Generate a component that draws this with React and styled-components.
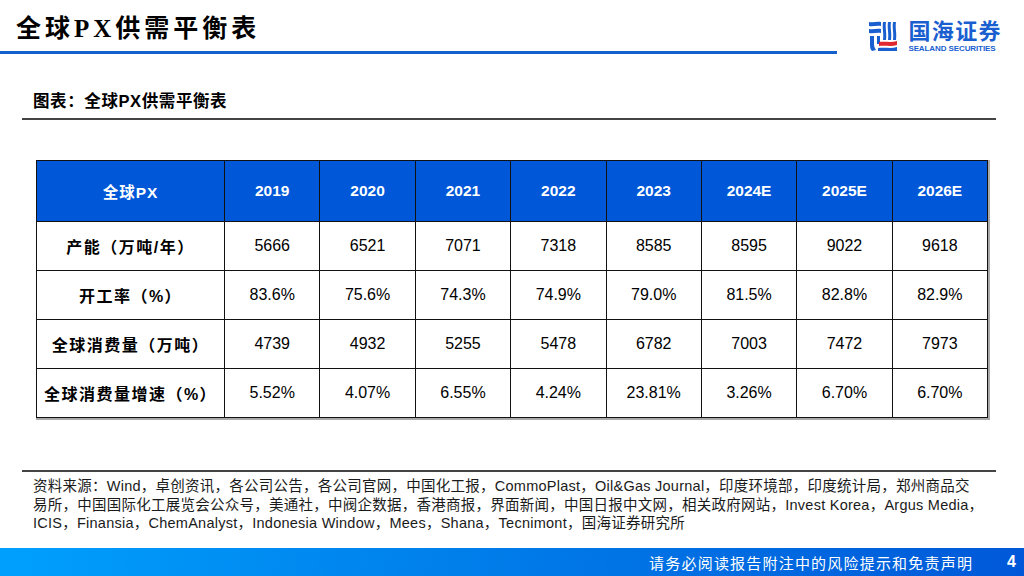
import React from 'react';
import styled, { createGlobalStyle } from 'styled-components';

const Global = createGlobalStyle`
  html, body {
    margin: 0;
    padding: 0;
    background: #fff;
  }
  body {
    font-family: "Liberation Sans", "Noto Sans CJK SC", sans-serif;
    color: #000;
  }
`;

const Page = styled.div`
  width: 1024px;
  height: 576px;
  overflow: hidden;
  display: flex;
  flex-direction: column;
`;

const Header = styled.header`
  height: 56px;
  display: flex;
  align-items: flex-start;
  justify-content: space-between;
`;

const TitleBlock = styled.div`
  width: 837px;
  height: 54px;
  border-bottom: 3px solid #1660cc;
  box-sizing: border-box;
  padding: 14px 0 0 16px;
`;

const Title = styled.h1`
  margin: 0;
  font-family: "Liberation Serif", "Noto Sans CJK SC", serif;
  font-size: 25px;
  font-weight: 700;
  letter-spacing: 4px;
  line-height: 30px;
`;

const Logo = styled.div`
  display: flex;
  align-items: center;
  gap: 9px;
  margin: 19px 22px 0 0;
`;

const LogoText = styled.div`
  display: flex;
  flex-direction: column;
  gap: 6px;
  color: #1a5fd0;
`;

const LogoCn = styled.span`
  font-family: "Noto Sans CJK SC", sans-serif;
  font-weight: 700;
  font-size: 22px;
  line-height: 20px;
  letter-spacing: 1.4px;
`;

const LogoEn = styled.span`
  font-family: "Liberation Sans", sans-serif;
  font-weight: 700;
  font-size: 8px;
  line-height: 8px;
  letter-spacing: -0.1px;
  white-space: nowrap;
`;

const Content = styled.section`
  flex: 1;
  padding: 0 28px 0 22px;
`;

const ChartTitle = styled.div`
  margin-top: 35px;
  padding: 0 0 7px 11px;
  border-bottom: 2px solid #444;
  font-size: 16.5px;
  font-weight: 700;
  line-height: 20px;
  letter-spacing: 0.6px;
`;

const TableWrap = styled.div`
  margin: 40px 0 0 14px;
  width: 952px;
  box-shadow: 1px 1px 0 1px #aaa;
`;

const Table = styled.table`
  width: 952px;
  border-collapse: collapse;
  table-layout: fixed;
  font-size: 16px;
`;

const Th = styled.th`
  background: #0058d8;
  color: #fff;
  font-weight: 700;
  font-size: 15.5px;
  height: 60px;
  border: 1px solid #111;
  text-align: center;
  padding: 0;
  width: ${p => (p.$first ? '187px' : 'auto')};
  letter-spacing: ${p => (p.$first ? '1px' : '0')};
`;

const Td = styled.td`
  height: 48px;
  border: 1px solid #111;
  text-align: center;
  padding: 0;
  font-weight: ${p => (p.$label ? 700 : 400)};
  letter-spacing: ${p => (p.$label ? '1.5px' : '0')};
`;

const Notes = styled.div`
  margin-top: 52px;
  border-top: 2px solid #444;
  padding: 5px 0 0 11px;
  font-size: 14.5px;
  line-height: 18.5px;
  letter-spacing: 0.25px;
  color: #1a1a1a;
`;

const NoteLine = styled.div`
  white-space: nowrap;
`;

const Footer = styled.footer`
  height: 28px;
  background: linear-gradient(100deg, #00a0fe 0%, #0082ec 40%, #0058d8 100%);
  display: flex;
  align-items: center;
  justify-content: flex-end;
  color: #fff;
  font-size: 15px;
  padding-right: 8px;
`;

const Disclaimer = styled.span`
  letter-spacing: 1.2px;
  margin-right: 34px;
`;

const PageNo = styled.span`
  font-weight: 700;
  font-size: 16px;
`;

const cols = ['2019', '2020', '2021', '2022', '2023', '2024E', '2025E', '2026E'];

const rows = [
  ['产能（万吨/年）', '5666', '6521', '7071', '7318', '8585', '8595', '9022', '9618'],
  ['开工率（%）', '83.6%', '75.6%', '74.3%', '74.9%', '79.0%', '81.5%', '82.8%', '82.9%'],
  ['全球消费量（万吨）', '4739', '4932', '5255', '5478', '6782', '7003', '7472', '7973'],
  ['全球消费量增速（%）', '5.52%', '4.07%', '6.55%', '4.24%', '23.81%', '3.26%', '6.70%', '6.70%'],
];

const notes = [
  '资料来源：Wind，卓创资讯，各公司公告，各公司官网，中国化工报，CommoPlast，Oil&Gas Journal，印度环境部，印度统计局，郑州商品交',
  '易所，中国国际化工展览会公众号，美通社，中阀企数据，香港商报，界面新闻，中国日报中文网，相关政府网站，Invest Korea，Argus Media，',
  'ICIS，Finansia，ChemAnalyst，Indonesia Window，Mees，Shana，Tecnimont，国海证券研究所',
];

const LogoMark = () => (
  <svg width="32" height="32" viewBox="0 0 32 32">
    <path d="M2 2 C6 3 10 1 14 2 L14 6 C10 5 6 7 2 6 Z" fill="#1a5fd0" />
    <path d="M2 9 C6 10 10 8 14 9 L14 13 C10 12 6 14 2 13 Z" fill="#1a5fd0" />
    <path d="M3 16 H7 V24 C7 27 8 28 9 30 L5 31 C3 29 3 27 3 24 Z" fill="#1a5fd0" />
    <path d="M10 16 H13 V24 H10 Z" fill="#1a5fd0" />
    <path d="M16 2 H19 C18 8 20 13 19 20 H16 C17 13 15 8 16 2 Z" fill="#1a5fd0" />
    <path d="M21 2 H24 C23 8 25 13 24 20 H21 C22 13 20 8 21 2 Z" fill="#1a5fd0" />
    <path d="M26 2 H29 C28 8 30 13 29 20 H26 C27 13 25 8 26 2 Z" fill="#1a5fd0" />
    <path d="M12 22 C18 21 24 23 30 21 L30 25 C24 27 18 25 12 26 Z" fill="#e0262e" />
    <path d="M11 28 C18 27 24 29 30 27 L30 31 L11 31 Z" fill="#1a5fd0" />
  </svg>
);

export default function App() {
  return (
    <Page>
      <Global />
      <Header>
        <TitleBlock>
          <Title>全球PX供需平衡表</Title>
        </TitleBlock>
        <Logo>
          <LogoMark />
          <LogoText>
            <LogoCn>国海证券</LogoCn>
            <LogoEn>SEALAND SECURITIES</LogoEn>
          </LogoText>
        </Logo>
      </Header>
      <Content>
        <ChartTitle>图表：全球PX供需平衡表</ChartTitle>
        <TableWrap>
          <Table>
            <thead>
              <tr>
                <Th $first>全球PX</Th>
                {cols.map(c => (
                  <Th key={c}>{c}</Th>
                ))}
              </tr>
            </thead>
            <tbody>
              {rows.map(r => (
                <tr key={r[0]}>
                  {r.map((v, i) => (
                    <Td key={i} $label={i === 0}>{v}</Td>
                  ))}
                </tr>
              ))}
            </tbody>
          </Table>
        </TableWrap>
        <Notes>
          {notes.map(n => (
            <NoteLine key={n}>{n}</NoteLine>
          ))}
        </Notes>
      </Content>
      <Footer>
        <Disclaimer>请务必阅读报告附注中的风险提示和免责声明</Disclaimer>
        <PageNo>4</PageNo>
      </Footer>
    </Page>
  );
}
